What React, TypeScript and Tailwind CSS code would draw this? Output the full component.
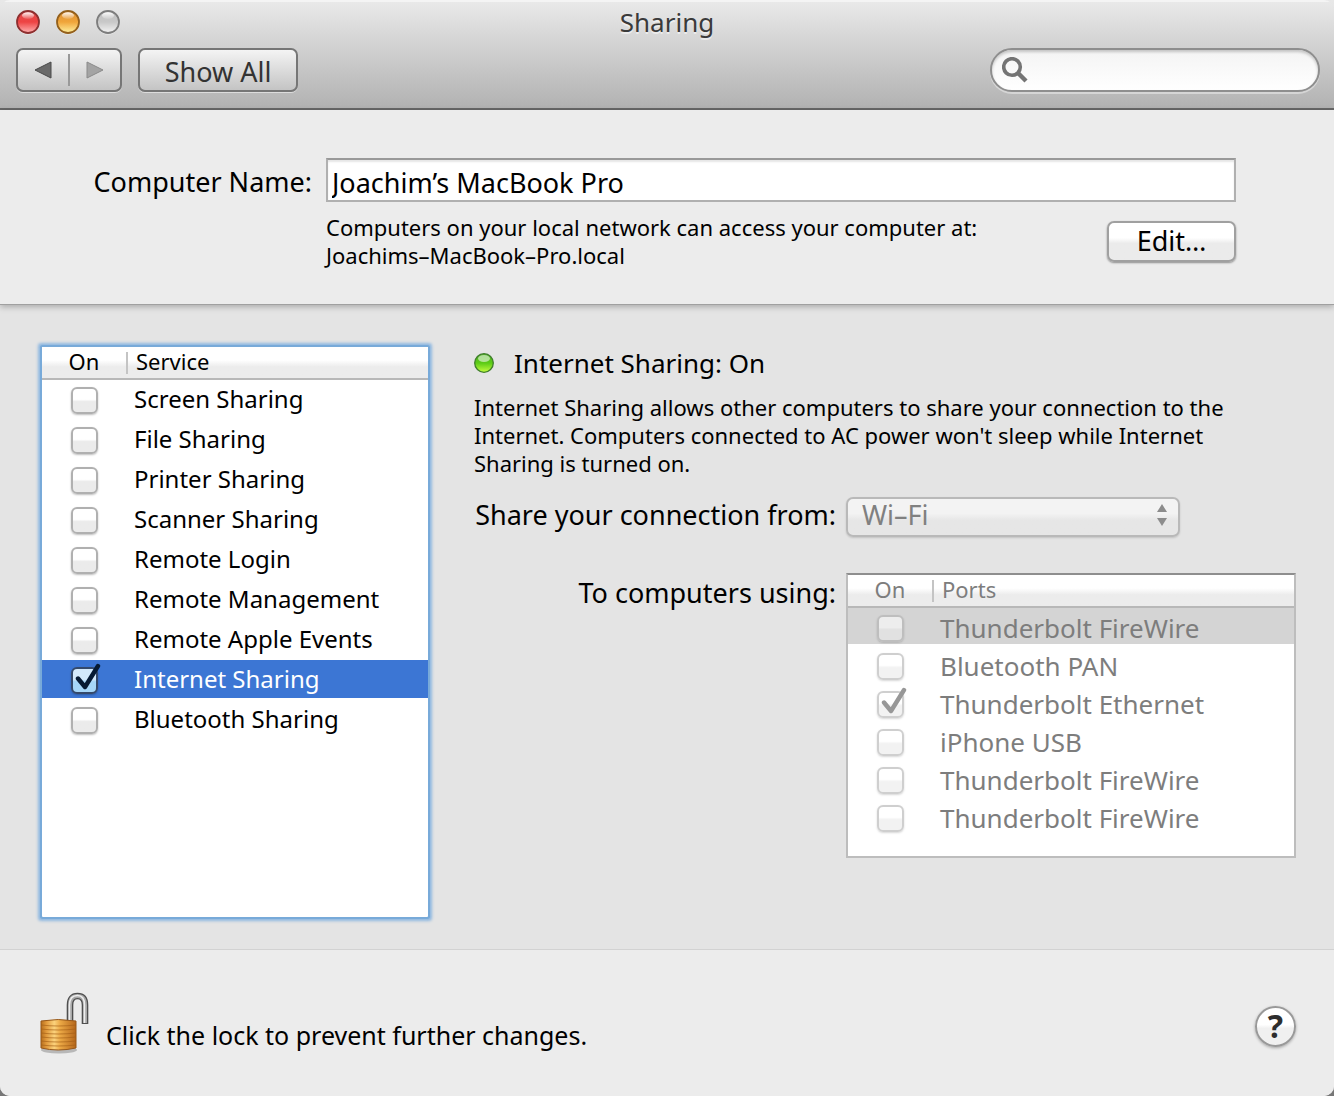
import React, { useState } from "react";

const services = [
  "Screen Sharing",
  "File Sharing",
  "Printer Sharing",
  "Scanner Sharing",
  "Remote Login",
  "Remote Management",
  "Remote Apple Events",
  "Internet Sharing",
  "Bluetooth Sharing",
];

const ports = [
  "Thunderbolt FireWire",
  "Bluetooth PAN",
  "Thunderbolt Ethernet",
  "iPhone USB",
  "Thunderbolt FireWire",
  "Thunderbolt FireWire",
];

function WindowLight({ id, label, rim, top, mid, bottom }: { id: string; label: string; rim: string; top: string; mid: string; bottom: string }) {
  return (
    <button type="button" aria-label={label} className="size-6">
      <svg viewBox="0 0 24 24" className="size-6 overflow-visible">
        <defs>
          <linearGradient id={id} x1="0" y1="0" x2="0" y2="1">
            <stop offset="0" stopColor={top} />
            <stop offset="0.5" stopColor={mid} />
            <stop offset="1" stopColor={bottom} />
          </linearGradient>
          <linearGradient id={id + "-shine"} x1="0" y1="0" x2="0" y2="1">
            <stop offset="0" stopColor="#fff" stopOpacity="0.95" />
            <stop offset="1" stopColor="#fff" stopOpacity="0.1" />
          </linearGradient>
        </defs>
        <circle cx="12" cy="13" r="11.5" fill="#fff" opacity="0.5" />
        <circle cx="12" cy="12" r="11" fill={`url(#${id})`} stroke={rim} strokeWidth="1.8" />
        <ellipse cx="12" cy="5.6" rx="6" ry="3.4" fill={`url(#${id}-shine)`} />
      </svg>
    </button>
  );
}

function CheckBox({ label, checked, disabled }: { label: string; checked: boolean; disabled?: boolean }) {
  return (
    <span className="relative block size-[27px]">
      <input
        type="checkbox"
        aria-label={label}
        defaultChecked={checked}
        disabled={disabled}
        className="peer block size-[27px] appearance-none rounded-[6px] border-2 border-[#b0b0b0] bg-linear-to-b from-white from-45% to-[#ebebeb] to-55% shadow-[0_1px_2px_rgba(0,0,0,0.25)] enabled:checked:border-[#34496b] enabled:checked:from-[#d3e9fb] enabled:checked:to-[#a5d6f8] disabled:opacity-60"
      />
      <svg viewBox="0 0 30 30" className="pointer-events-none absolute -top-1 left-0 hidden size-[30px] text-[#061a33] peer-checked:block peer-disabled:text-[#979797]">
        <path d="M7 15.5L14 24L27 3" fill="none" stroke="currentColor" strokeWidth="4.4" strokeLinecap="round" strokeLinejoin="round" />
      </svg>
    </span>
  );
}

function HeaderRow({ name }: { name: string }) {
  return (
    <thead>
      <tr className="h-[33px] bg-linear-to-b from-white from-40% to-[#ececec] to-60%">
        <th className="w-[84px] border-b-2 border-[#b8b8b8] p-0 text-center font-normal">
          <span className="flex h-[22px] items-center justify-center pb-1">On</span>
        </th>
        <th className="border-b-2 border-[#b8b8b8] p-0 text-left font-normal">
          <span className="flex h-[22px] items-center border-l-2 border-[#c4c4c4] pb-1 pl-2">{name}</span>
        </th>
      </tr>
    </thead>
  );
}

export default function App() {
  const [selected, setSelected] = useState(7);
  return (
    <div className="flex min-h-screen flex-col bg-[#777] bg-linear-to-b from-[#e8e8e8] to-[#777] font-['Noto_Sans','Open_Sans',sans-serif] text-[27px] text-black">
      <div className="flex grow flex-col overflow-hidden rounded-[10px] bg-[#e4e4e4]">
        <header className="border-b-2 border-[#686868] bg-linear-to-b from-[#eaeaea] to-[#b2b2b2] pb-4 shadow-[inset_0_2px_0_#f4f4f4]">
          <div className="grid grid-cols-[1fr_auto_1fr] items-start px-4">
            <div className="flex gap-4 pt-[10px]">
              <WindowLight id="close" label="Close" rim="#8e2f2f" top="#e24a4a" mid="#ee4343" bottom="#ffb3b3" />
              <WindowLight id="minimize" label="Minimize" rim="#94601c" top="#dc9035" mid="#f0a53a" bottom="#fff2a0" />
              <WindowLight id="zoom" label="Zoom" rim="#7d7d7d" top="#c0c0c0" mid="#c8c8c8" bottom="#f4f4f4" />
            </div>
            <h1 className="h-12 text-[26px] leading-[44px] text-[#3a3a3a] [text-shadow:0_2px_0_rgba(255,255,255,0.5)]">Sharing</h1>
          </div>
          <div className="flex items-center pr-[14px] pl-4">
            <div className="flex h-11 w-[106px] items-center rounded-[7px] border-2 border-[#767676] bg-linear-to-b from-[#f4f4f4] to-[#c4c4c4] shadow-[0_1px_0_rgba(255,255,255,0.5)]">
              <button type="button" aria-label="Back" className="flex flex-1 justify-center">
                <svg viewBox="0 0 18 18" className="size-[18px]">
                  <path d="M1 9L17 1V17Z" fill="#6a6a6a" stroke="#4a4a4a" />
                </svg>
              </button>
              <span className="h-8 w-[2px] bg-[#999]" />
              <button type="button" aria-label="Forward" className="flex flex-1 justify-center">
                <svg viewBox="0 0 18 18" className="size-[18px]">
                  <path d="M17 9L1 1V17Z" fill="#a4a4a4" stroke="#8a8a8a" />
                </svg>
              </button>
            </div>
            <button type="button" className="ml-4 h-11 w-40 rounded-[7px] border-2 border-[#767676] bg-linear-to-b from-[#f4f4f4] to-[#c4c4c4] pt-[3px] leading-9 text-[#333] shadow-[0_1px_0_rgba(255,255,255,0.5)]">
              Show All
            </button>
            <label className="ml-auto flex h-11 w-[330px] items-center rounded-full border-2 border-[#8e8e8e] bg-linear-to-b from-[#f4f4f4] to-white pr-4 pl-[10px] shadow-[inset_0_2px_3px_rgba(0,0,0,0.2),0_2px_0_rgba(255,255,255,0.4)]">
              <svg viewBox="0 0 26 26" className="size-[26px] shrink-0">
                <circle cx="10" cy="10" r="8.3" fill="none" stroke="#747474" strokeWidth="3.6" />
                <path d="M16 16L24 24" stroke="#747474" strokeWidth="4.4" />
              </svg>
              <input type="search" aria-label="Search" className="ml-2 h-9 w-full min-w-0 bg-transparent outline-none" />
            </label>
          </div>
        </header>

        <section className="border-b border-[#a0a0a0] bg-[#ececec] pt-12 pr-[98px] pb-[35px] shadow-[0_2px_6px_rgba(0,0,0,0.25)]">
          <div className="grid grid-cols-[312px_1fr] gap-x-[14px]">
            <label htmlFor="computer-name" className="text-right leading-12">Computer Name:</label>
            <input
              id="computer-name"
              type="text"
              defaultValue="Joachim’s MacBook Pro"
              className="h-11 w-full border-2 border-[#b0b0b0] border-t-[#999] bg-white px-1 pt-1 shadow-[inset_0_2px_2px_rgba(0,0,0,0.1)] outline-none"
            />
            <div className="col-start-2 flex justify-between pt-[7px]">
              <p className="text-[22px] leading-7">
                Computers on your local network can access your computer at:
                <br />
                Joachims–MacBook–Pro.local
              </p>
              <button type="button" className="mt-2 h-[41px] w-[129px] rounded-[7px] border-2 border-[#a0a0a0] bg-linear-to-b from-white from-40% to-[#ebebeb] to-55% pb-[2px] leading-8 shadow-[0_1px_2px_rgba(0,0,0,0.4)]">
                Edit…
              </button>
            </div>
          </div>
        </section>

        <main className="flex grow gap-[46px] pt-[42px] pr-[38px] pb-8 pl-[42px]">
          <div className="w-[386px] shrink-0 rounded-[1px] bg-white shadow-[0_0_0_2px_#78aad9,0_0_3px_4px_#8fb8e0]">
            <table className="w-full border-separate border-spacing-0 text-[22px] leading-7">
              <HeaderRow name="Service" />
              <tbody className="text-[24px]">
                {services.map((name, i) => (
                  <tr
                    key={name}
                    onClick={() => setSelected(i)}
                    className={i === selected ? "h-10 bg-[#3c76d4] text-white" : "h-10"}
                  >
                    <td className="border-b-2 border-white p-0 pt-[2px] pl-[29px]">
                      <CheckBox label={name} checked={name === "Internet Sharing"} />
                    </td>
                    <td className="border-b-2 border-white p-0 pl-2">{name}</td>
                  </tr>
                ))}
              </tbody>
            </table>
          </div>

          <div className="min-w-0 grow">
            <h2 className="flex items-center gap-5 text-[26px] leading-8">
              <svg viewBox="0 0 20 20" className="size-5">
                <defs>
                  <linearGradient id="status" x1="0" y1="0" x2="0" y2="1">
                    <stop offset="0" stopColor="#4fae28" />
                    <stop offset="0.5" stopColor="#5bcb16" />
                    <stop offset="1" stopColor="#c5ff3f" />
                  </linearGradient>
                </defs>
                <circle cx="10" cy="10" r="9.3" fill="url(#status)" stroke="#3f7d2c" strokeWidth="1.3" />
                <ellipse cx="10" cy="5.5" rx="6" ry="3.5" fill="#fff" opacity="0.55" />
              </svg>
              Internet Sharing: On
            </h2>
            <p className="mt-[14px] text-[22px] leading-7">
              Internet Sharing allows other computers to share your connection to the
              <br />
              Internet. Computers connected to AC power won't sleep while Internet
              <br />
              Sharing is turned on.
            </p>
            <div className="mt-[18px] grid grid-cols-[362px_1fr] gap-x-[10px]">
              <label htmlFor="source" className="text-right leading-10">Share your connection from:</label>
              <span className="relative block h-10 w-[334px]">
                <select id="source" disabled className="h-10 w-full appearance-none rounded-[7px] border-2 border-[#b9b9b9] bg-linear-to-b from-[#f3f3f3] from-40% to-[#e6e6e6] to-60% pb-1 pl-[14px] leading-8 text-[#808080] opacity-100 shadow-[0_1px_2px_rgba(0,0,0,0.15)]">
                  <option>Wi–Fi</option>
                </select>
                <svg viewBox="0 0 12 22" className="pointer-events-none absolute top-[9px] right-3 h-[22px] w-3">
                  <path d="M6 0L11 8H1ZM1 14H11L6 22Z" fill="#8c8c8c" />
                </svg>
              </span>
              <span id="ports-label" className="mt-[38px] text-right leading-10">To computers using:</span>
              <div className="mt-[38px] h-[285px] border-2 border-[#bdbdbd] border-t-[#8e8e8e] bg-white">
                <table aria-labelledby="ports-label" className="w-full border-separate border-spacing-0 text-[22px] leading-7 text-[#7d7d7d]">
                  <HeaderRow name="Ports" />
                  <tbody className="text-[26px]">
                    {ports.map((name, i) => (
                      <tr key={i} className={i === 0 ? "h-[38px] bg-[#d4d4d4]" : "h-[38px]"}>
                        <td className="border-b-2 border-white p-0 pt-1 pl-[29px]">
                          <CheckBox label={name} checked={i === 2} disabled />
                        </td>
                        <td className="border-b-2 border-white p-0 pt-1 pl-2">{name}</td>
                      </tr>
                    ))}
                  </tbody>
                </table>
              </div>
            </div>
          </div>
        </main>

        <footer className="flex items-center border-t border-[#d2d2d2] bg-[#ececec] px-[38px] pt-10 pb-10">
          <button type="button" aria-label="Lock" className="h-[66px] w-[52px]">
            <svg viewBox="0 0 52 66" className="h-[66px] w-[52px]">
              <defs>
                <linearGradient id="brass" x1="0" y1="0" x2="1" y2="0">
                  <stop offset="0" stopColor="#b8701f" />
                  <stop offset="0.15" stopColor="#e0983a" />
                  <stop offset="0.38" stopColor="#fbd27c" />
                  <stop offset="0.55" stopColor="#eba845" />
                  <stop offset="1" stopColor="#b5661a" />
                </linearGradient>
              </defs>
              <ellipse cx="21" cy="60" rx="18" ry="3.5" fill="#000" opacity="0.22" />
              <path d="M32 32V15Q32 6 39.5 6Q47 6 47 15V34" fill="none" stroke="#4f4f4f" strokeWidth="6.6" />
              <path d="M32 32V15Q32 6 39.5 6Q47 6 47 15V33" fill="none" stroke="#a9a9a9" strokeWidth="4" />
              <path d="M31.5 32V15Q31.5 5.5 39.5 5.5Q46.5 5.5 46.5 15V33" fill="none" stroke="#eee" strokeWidth="1.5" />
              <path d="M3 31Q20 28 38 31V58Q20 62 3 58Z" fill="url(#brass)" stroke="#96581b" strokeWidth="1" />
              <path d="M3 35Q20 37 38 35M3 39Q20 41 38 39M3 43Q20 45 38 43M3 47Q20 49 38 47M3 51Q20 53 38 51M3 55Q20 57 38 55" fill="none" stroke="#a55f17" strokeWidth="1.2" opacity="0.65" />
            </svg>
          </button>
          <p className="ml-4 pt-6 text-[25px] leading-9">Click the lock to prevent further changes.</p>
          <button type="button" aria-label="Help" className="mt-[6px] ml-auto size-[41px] rounded-full border-2 border-[#999] bg-linear-to-b from-white from-45% to-[#f0f0f0] to-55% text-[32px] leading-9 font-bold text-[#2d2d2d] shadow-[0_1px_3px_rgba(0,0,0,0.3)]">
            ?
          </button>
        </footer>
      </div>
    </div>
  );
}
